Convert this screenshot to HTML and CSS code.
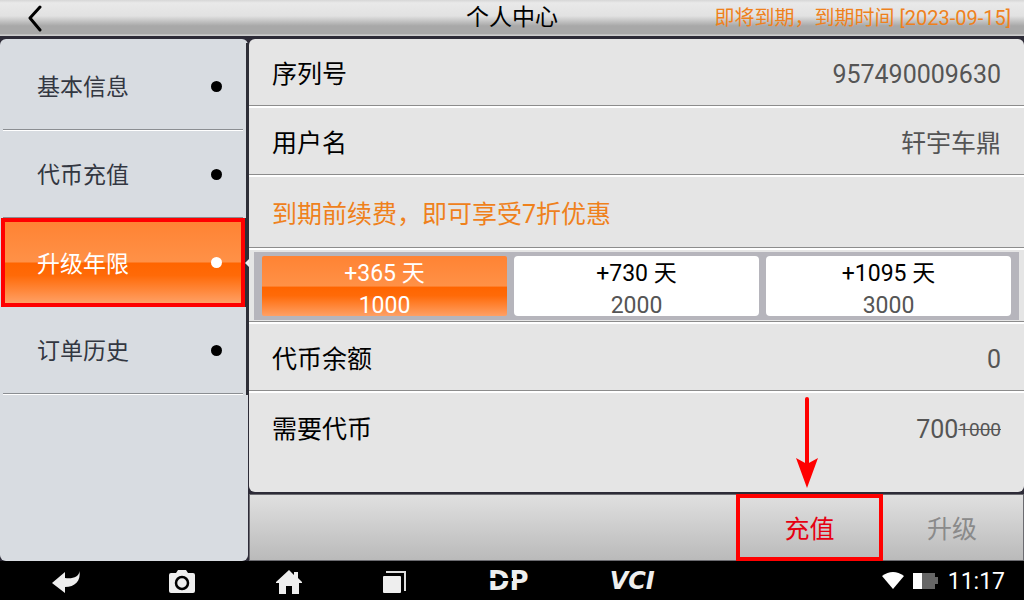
FILE: index.html
```html
<!DOCTYPE html>
<html lang="zh-CN">
<head>
<meta charset="utf-8">
<meta name="viewport" content="width=device-width, initial-scale=1">
<title>个人中心</title>
<link rel="stylesheet" href="styles.css">
</head>
<body>
<header class="topbar">
  <button class="back" type="button" aria-label="返回">
    <svg width="16" height="28" viewBox="0 0 16 28"><path d="M13 3 3 14 13 26" fill="none" stroke="#000" stroke-width="3" stroke-linecap="round" stroke-linejoin="round"/></svg>
  </button>
  <h1 class="title">个人中心</h1>
  <p class="expiry">即将到期，到期时间 [2023-09-15]</p>
</header>

<main class="main">
  <nav class="sidebar">
    <a class="item" href="#info"><span class="text">基本信息</span><span class="dot"></span></a>
    <a class="item" href="#tokens"><span class="text">代币充值</span><span class="dot"></span></a>
    <a class="item active" href="#upgrade" aria-current="page"><span class="text">升级年限</span><span class="dot"></span></a>
    <a class="item" href="#orders"><span class="text">订单历史</span><span class="dot"></span></a>
  </nav>

  <section class="content">
    <div class="panel">
      <div class="row"><span class="label">序列号</span><span class="value number">957490009630</span></div>
      <div class="row"><span class="label">用户名</span><span class="value name">轩宇车鼎</span></div>
      <div class="row promo"><span class="label">到期前续费，即可享受7折优惠</span></div>
      <div class="plans">
        <div class="plan-band">
          <button class="plan selected" type="button"><span class="days">+365 天</span><span class="cost">1000</span></button>
          <button class="plan" type="button"><span class="days">+730 天</span><span class="cost">2000</span></button>
          <button class="plan" type="button"><span class="days">+1095 天</span><span class="cost">3000</span></button>
        </div>
      </div>
      <div class="row"><span class="label">代币余额</span><span class="value number">0</span></div>
      <div class="row last"><span class="label">需要代币</span><span class="value number">700<s class="old">1000</s></span></div>
    </div>
    <div class="actions">
      <button class="action recharge" type="button">充值
        <svg class="arrow" width="24" height="92" viewBox="0 0 24 92"><path d="M12 2V68" stroke="#f00" stroke-width="4" stroke-linecap="round"/><path d="M1 61 12 67 23 61 12 91Z" fill="#f00"/></svg>
      </button>
      <button class="action upgrade" type="button" disabled>升级</button>
    </div>
  </section>
</main>

<footer class="navbar">
  <button class="nav" type="button" aria-label="返回"><svg width="36" height="24" viewBox="0 0 36 24"><path d="M0 13 13 2V8C21 9 27 7 27.500 1C29 11 23 17 13 17V23Z" fill="#eee"/></svg></button>
  <button class="nav" type="button" aria-label="截图"><svg width="26" height="24" viewBox="0 0 26 24"><path d="M2 3H7L9 0H17L19 3H24Q26 3 26 5V21Q26 23 24 23H2Q0 23 0 21V5Q0 3 2 3Z" fill="#eee"/><circle cx="13" cy="13" r="6" fill="none" stroke="#000" stroke-width="2.500"/></svg></button>
  <button class="nav" type="button" aria-label="主页"><svg width="26" height="24" viewBox="0 0 26 24"><path d="M13 0 18 5V2H22V8L26 12V13H23V24H16V16H10V24H3V13H0V12Z" fill="#eee"/></svg></button>
  <button class="nav" type="button" aria-label="最近任务"><svg width="24" height="24" viewBox="0 0 24 24"><rect y="6" width="18" height="17" rx="1" fill="#eee"/><path d="M3 2H22V21" fill="none" stroke="#ddd" stroke-width="2"/></svg></button>
  <button class="nav logo dp" type="button">DP</button>
  <button class="nav logo vci" type="button">VCI</button>
  <div class="status">
    <svg width="22" height="18" viewBox="0 0 22 18"><path d="M0 4Q11-4 22 4L11 17Z" fill="#fff"/></svg>
    <svg width="26" height="18" viewBox="0 0 26 18"><path d="M0 1H22V5H25V12H22V17H0Z" fill="#666"/><path d="M0 1H9V17H0Z" fill="#fff"/></svg>
    <time class="clock">11:17</time>
  </div>
</footer>
</body>
</html>
```
FILE: styles.css
```css
* { box-sizing: border-box; }
body {
  margin: 0;
  min-height: 100vh;
  display: flex;
  flex-direction: column;
  background: #2d2b37;
  color: #000;
  font-family: Roboto, "Noto Sans CJK SC", sans-serif;
}
button { margin: 0; padding: 0; border: 0; background: none; font: inherit; color: inherit; }
svg { display: block; }

.topbar {
  height: 36px;
  margin-bottom: 3px;
  padding: 0 13px;
  display: grid;
  grid-template-columns: 1fr auto 1fr;
  align-items: center;
  background: linear-gradient(#d6d6d6 0, #e9e9e9 8%, #e2e2e2 44%, #a8a8a8 72%, #a8a8a8 94%, #ccc 97%);
}
.back { width: 16px; height: 28px; margin-left: 14px; }
.title { margin: 0; font-size: 23px; line-height: 36px; font-weight: 400; }
.expiry { margin: 0; justify-self: end; color: #ef811c; font-size: 20px; line-height: 34px; white-space: nowrap; }

.main { flex: 1; display: flex; }
.sidebar {
  width: 248px;
  padding-top: 4px;
  background: #d8dce1;
  border-radius: 6px;
}
.item {
  position: relative;
  height: 88px;
  margin-right: 2px;
  padding: 0 24px 2px 37px;
  display: flex;
  align-items: center;
  justify-content: space-between;
  color: #333741;
  font-size: 23px;
  text-decoration: none;
  background: linear-gradient(#8b8e92, #8b8e92) 3px 86px / 240px 1px no-repeat, linear-gradient(#fff, #fff) 3px 87px / 240px 1px no-repeat;
  box-shadow: 3px 0 #2d2e37;
}
.text { padding-bottom: 2px; }
.dot { width: 11px; height: 11px; border-radius: 50%; background: #000; }
.item.active {
  height: 89px;
  margin: -1px 3px 0 1px;
  padding: 0 19px 0 32px;
  border: 4px solid #f00;
  color: #fff;
  background: linear-gradient(#ff8333, #ff9147 49%, #ff6500 51%, #ff6a08 66%, #ffa065);
  box-shadow: 4px 0 #2d2e37;
}
.item.active .dot { background: #fff; }
.item.active::after {
  content: "";
  position: absolute;
  right: -8px;
  top: 37px;
  border: 4px solid transparent;
  border-left-width: 0;
  border-right-color: #eee;
}

.content { flex: 1; min-width: 0; margin-left: 1px; display: flex; flex-direction: column; }
.panel { flex: 1; background: #e5e5e5; border-radius: 6px; }
.row {
  height: 69px;
  padding: 0 23px;
  display: flex;
  align-items: center;
  justify-content: space-between;
  border-bottom: 2px solid #fff;
  box-shadow: inset 0 -1px #8c8c8c;
  font-size: 25px;
}
.label, .name { padding-bottom: 2px; }
.value { color: #555; }
.number { padding-top: 3px; }
.promo { height: 73px; color: #ef811c; }
.last { border: 0; box-shadow: none; }
.plans { padding: 2px 5px; border-bottom: 2px solid #fff; box-shadow: inset 0 -1px #8c8c8c; }
.plan-band { display: grid; grid-template-columns: repeat(3, 1fr); gap: 7px; padding: 4px 8px; background: #b6b5bc; }
.plan { height: 60px; padding-top: 2px; border-radius: 4px; background: #fff; font-size: 23px; }
.days, .cost { display: block; line-height: 32px; }
.cost { color: #555; }
.selected { border-radius: 2px; background: linear-gradient(#ff8333, #ff9147 50%, #ff6500 52%, #ff6a08 66%, #ffa065); }
.selected, .selected .cost { color: #fff; }
.old { font-size: 19px; vertical-align: 2px; }

.actions {
  height: 67px;
  margin-top: 2px;
  padding-right: 2px;
  display: flex;
  justify-content: flex-end;
  background: linear-gradient(#e0e0e0, #bababa);
  border: 1px solid #6b6b70;
}
.action { padding-bottom: 2px; font-size: 25px; }
.recharge { position: relative; width: 147px; margin: -1px 0; border: 4px solid #f00; color: #e60012; }
.arrow { position: absolute; left: 55px; top: -101px; }
.upgrade { width: 138px; color: #8a8a8a; }

.navbar {
  height: 39px;
  padding: 0 19px 0 52px;
  display: flex;
  align-items: center;
  gap: 81px;
  background: #000;
}
.nav { flex: none; padding-top: 2px; }
.logo { padding: 0; color: #eee; font: 700 26px/30px "DejaVu Sans", sans-serif; }
.dp { position: relative; }
.dp::after { content: ""; position: absolute; left: 0; width: 25px; top: 12px; height: 3px; background: #000; }
.vci { font-size: 24px; font-style: oblique; }
.status { margin-left: auto; display: flex; align-items: center; gap: 9px; color: #fff; }
.clock { font-size: 23px; line-height: 34px; padding-top: 3px; }
```
